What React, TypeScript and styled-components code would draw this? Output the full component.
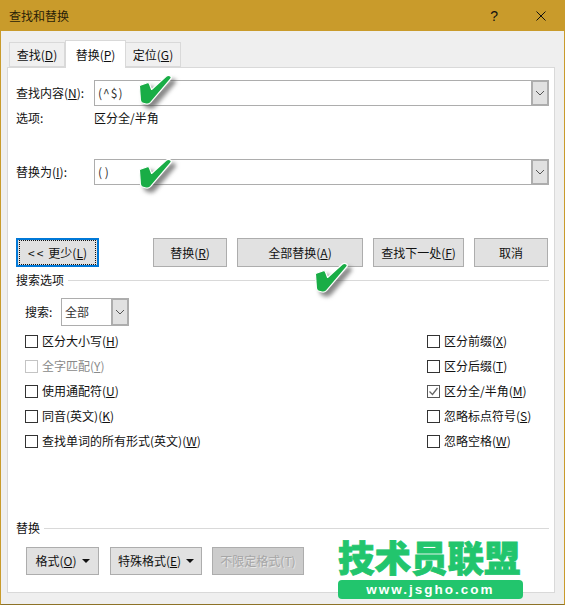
import React from "react";
import styled, { createGlobalStyle } from "styled-components";

const Global = createGlobalStyle`
  html, body { margin: 0; padding: 0; background: #efefef; }
  body { font-family: "Noto Sans CJK SC", "Liberation Sans", sans-serif; font-size: 12px; color: #111; }
  u { text-underline-offset: 1px; }
`;

const Window = styled.div`
  position: relative;
  box-sizing: border-box;
  width: 565px;
  height: 605px;
  overflow: hidden;
  background: #efefef;
  border-left: 1px solid #c99b2b;
  border-right: 1px solid #c99b2b;
  border-bottom: 1px solid #8d7226;
  display: flex;
  flex-direction: column;
`;

const TitleBar = styled.header`
  flex: none;
  height: 31px;
  background: #c99b2b;
  display: flex;
  align-items: center;
  padding: 0 18px 0 8px;
  color: #2a2208;
  line-height: 1;
`;

const Title = styled.div`
  flex: 1;
  font-size: 12px;
`;

const Help = styled.span`
  font-family: "Liberation Sans", sans-serif;
  font-size: 14px;
  margin-right: 38px;
  color: #111;
`;

const TabStrip = styled.div`
  flex: none;
  height: 27px;
  margin-top: 9px;
  padding-left: 8px;
  display: flex;
  align-items: flex-end;
`;

const Tab = styled.div<{ $active?: boolean; $w: number }>`
  box-sizing: border-box;
  position: relative;
  width: ${(p) => p.$w}px;
  height: ${(p) => (p.$active ? 28 : 25)}px;
  margin-bottom: ${(p) => (p.$active ? -1 : 0)}px;
  z-index: ${(p) => (p.$active ? 1 : 0)};
  background: ${(p) => (p.$active ? "#fff" : "#f0f0f0")};
  border: 1px solid #d9d9d9;
  border-bottom: ${(p) => (p.$active ? "none" : "1px solid #d9d9d9")};
  border-left: ${(p) => (p.$active ? "1px solid #d9d9d9" : "none")};
  display: flex;
  align-items: center;
  justify-content: center;
  &:first-child { border-left: 1px solid #d9d9d9; }
`;

const Panel = styled.main`
  box-sizing: border-box;
  flex: none;
  width: 548px;
  height: 526px;
  margin-left: 6px;
  background: #fff;
  border: 1px solid #d9d9d9;
  padding: 12px 5px 0 8px;
  display: flex;
  flex-direction: column;
`;

const FieldRow = styled.div<{ $top: number }>`
  display: flex;
  align-items: center;
  height: 26px;
  margin-top: ${(p) => p.$top}px;
`;

const FieldLabel = styled.label`
  flex: none;
  width: 78px;
  padding-bottom: 2px;
`;

const Combo = styled.div`
  box-sizing: border-box;
  flex: 1;
  height: 26px;
  border: 1px solid #adadad;
  display: flex;
  align-items: center;
`;

const ComboText = styled.span<{ $spaced?: boolean }>`
  flex: 1;
  padding: 0 0 2px 3px;
  color: #333;
  font-size: 12px;
  letter-spacing: ${(p) => (p.$spaced ? "1px" : "0")};
`;

const ComboArrow = styled.span`
  box-sizing: border-box;
  flex: none;
  width: 18px;
  height: 26px;
  margin: -1px -1px -1px 0;
  background: #e1e1e1;
  border: 2px solid #adadad;
  display: flex;
  align-items: center;
  justify-content: center;
`;

const OptionLine = styled.div`
  display: flex;
  align-items: center;
  height: 17px;
  margin-top: 4px;
`;

const OptionValue = styled.span`
  padding-bottom: 2px;
`;

const ActionRow = styled.div`
  display: flex;
  height: 29px;
  margin-top: 53px;
  gap: 10px;
`;

const Button = styled.div<{ $w: number; $after?: number; $disabled?: boolean }>`
  box-sizing: border-box;
  flex: none;
  width: ${(p) => p.$w}px;
  height: 100%;
  margin-right: ${(p) => p.$after ?? 0}px;
  padding-bottom: 1px;
  background: ${(p) => (p.$disabled ? "#cccccc" : "#e1e1e1")};
  border: 1px solid #adadad;
  color: ${(p) => (p.$disabled ? "#a6a6a6" : "#111")};
  text-shadow: ${(p) => (p.$disabled ? "1px 1px 0 #e6e6e6" : "none")};
  display: flex;
  align-items: center;
  justify-content: center;
  gap: 5px;
  white-space: nowrap;
`;

const DefaultButton = styled(Button)`
  border: 2px solid #0078d7;
  padding: 0;
`;

const FocusRing = styled.span`
  box-sizing: border-box;
  width: 100%;
  height: 100%;
  margin: 1px;
  padding-bottom: 1px;
  border: 1px dotted #111;
  display: flex;
  align-items: center;
  justify-content: center;
`;

const Arrows = styled.span`
  letter-spacing: 2px;
  margin-right: 3px;
`;

const Section = styled.div<{ $top: number }>`
  display: flex;
  align-items: center;
  height: 18px;
  margin-top: ${(p) => p.$top}px;
  gap: 4px;
  line-height: 16px;
  padding-bottom: 2px;
  box-sizing: border-box;
  &::after {
    content: "";
    flex: 1;
    height: 1px;
    background: #d9d9d9;
  }
`;

const SearchRow = styled.div`
  display: flex;
  align-items: center;
  height: 28px;
  margin-top: 8px;
  padding-left: 9px;
`;

const SearchLabel = styled.label`
  flex: none;
  width: 36px;
  padding-bottom: 2px;
`;

const Select = styled.div`
  box-sizing: border-box;
  width: 68px;
  height: 28px;
  border: 1px solid #adadad;
  display: flex;
  align-items: center;
`;

const SelectArrow = styled(ComboArrow)`
  height: 28px;
`;

const Options = styled.div`
  display: flex;
  justify-content: space-between;
  margin-top: 3px;
  padding-left: 9px;
`;

const Column = styled.div<{ $w?: number }>`
  display: flex;
  flex-direction: column;
  width: ${(p) => (p.$w ? `${p.$w}px` : "auto")};
`;

const CheckRow = styled.div<{ $disabled?: boolean }>`
  display: flex;
  align-items: center;
  height: 25px;
  gap: 4px;
  color: ${(p) => (p.$disabled ? "#8a8a8a" : "#111")};
`;

const CheckText = styled.span`
  padding-bottom: 2px;
`;

const Box = styled.span<{ $disabled?: boolean; $checked?: boolean }>`
  box-sizing: border-box;
  flex: none;
  width: 13px;
  height: 13px;
  border: 1px solid ${(p) => (p.$disabled ? "#c4c4c4" : p.$checked ? "#555" : "#333")};
  background: #fff;
  display: flex;
  align-items: center;
  justify-content: center;
`;

const FormatRow = styled.div`
  display: flex;
  height: 28px;
  margin-top: 9px;
  padding-left: 10px;
  gap: 10px;
`;

const Caret = styled.span`
  width: 0;
  height: 0;
  border-left: 4px solid transparent;
  border-right: 4px solid transparent;
  border-top: 4px solid #111;
`;

const Tick = styled.svg<{ $left: number; $top: number }>`
  position: absolute;
  left: ${(p) => p.$left}px;
  top: ${(p) => p.$top}px;
  width: 38px;
  height: 34px;
  overflow: visible;
  filter: drop-shadow(4px 4px 2px rgba(70, 70, 70, 0.65));
`;

const Watermark = styled.div`
  position: absolute;
  left: 337px;
  top: 534px;
  width: 185px;
  display: flex;
  flex-direction: column;
  align-items: stretch;
`;

const WatermarkTitle = styled.div`
  font-size: 36.5px;
  line-height: 46px;
  font-weight: 900;
  color: #22c56d;
  white-space: nowrap;
  -webkit-text-stroke: 0.8px #22c56d;
`;

const WatermarkUrl = styled.div`
  height: 19px;
  background: #22c56d;
  border-radius: 4px;
  color: #fff;
  font-family: "Liberation Sans", sans-serif;
  font-weight: 700;
  font-size: 13.5px;
  line-height: 19px;
  letter-spacing: 2px;
  text-align: center;
`;

const Chevron = () => (
  <svg width="10" height="6" viewBox="0 0 10 6">
    <path d="M1 1l4 4 4-4" fill="none" stroke="#555" strokeWidth="1" />
  </svg>
);

const GreenTick = ({ left, top }: { left: number; top: number }) => (
  <Tick $left={left} $top={top} viewBox="0 0 38 34">
    <path
      d="M2.5 13 Q2 11.5 4 11 L10.5 8.6 Q12 8.2 12.5 10 L14.6 15.5 L29.5 2 Q31.5 .6 33.5 2 Q35 3.4 33.6 5 L13.5 28.6 Q11.5 30.6 9 30 L5.5 29 Q3.6 28.4 3.4 26 Z"
      fill="#19ad46"
      stroke="#fff"
      strokeWidth="1.2"
      strokeLinejoin="round"
    />
  </Tick>
);

type Opt = { text: string; key: string; disabled?: boolean; checked?: boolean };

const leftOptions: Opt[] = [
  { text: "区分大小写", key: "H" },
  { text: "全字匹配", key: "Y", disabled: true },
  { text: "使用通配符", key: "U" },
  { text: "同音(英文)", key: "K" },
  { text: "查找单词的所有形式(英文)", key: "W" },
];

const rightOptions: Opt[] = [
  { text: "区分前缀", key: "X" },
  { text: "区分后缀", key: "T" },
  { text: "区分全/半角", key: "M", checked: true },
  { text: "忽略标点符号", key: "S" },
  { text: "忽略空格", key: "W" },
];

const Check = ({ opt }: { opt: Opt }) => (
  <CheckRow $disabled={opt.disabled}>
    <Box $disabled={opt.disabled} $checked={opt.checked}>
      {opt.checked && (
        <svg width="11" height="11" viewBox="0 0 11 11">
          <path d="M1.5 5.5l3 3 5-6.5" fill="none" stroke="#666" strokeWidth="1.3" />
        </svg>
      )}
    </Box>
    <CheckText>
      {opt.text}(<u>{opt.key}</u>)
    </CheckText>
  </CheckRow>
);

export default function App() {
  return (
    <>
      <Global />
      <Window>
        <TitleBar>
          <Title>查找和替换</Title>
          <Help>?</Help>
          <svg width="10" height="10" viewBox="0 0 10 10">
            <path d="M.5.5l9 9M9.5.5l-9 9" stroke="#111" strokeWidth="1" fill="none" />
          </svg>
        </TitleBar>
        <TabStrip>
          <Tab $w={56}><span>查找(<u>D</u>)</span></Tab>
          <Tab $w={61} $active><span>替换(<u>P</u>)</span></Tab>
          <Tab $w={55}><span>定位(<u>G</u>)</span></Tab>
        </TabStrip>
        <Panel>
          <FieldRow $top={0}>
            <FieldLabel>查找内容(<u>N</u>):</FieldLabel>
            <Combo>
              <ComboText $spaced>(^$)</ComboText>
              <ComboArrow><Chevron /></ComboArrow>
            </Combo>
          </FieldRow>
          <OptionLine>
            <FieldLabel>选项:</FieldLabel>
            <OptionValue>区分全/半角</OptionValue>
          </OptionLine>
          <FieldRow $top={32}>
            <FieldLabel>替换为(<u>I</u>):</FieldLabel>
            <Combo>
              <ComboText>( )</ComboText>
              <ComboArrow><Chevron /></ComboArrow>
            </Combo>
          </FieldRow>
          <ActionRow>
            <DefaultButton $w={83} $after={44}>
              <FocusRing><Arrows>&lt;&lt;</Arrows><span>更少(<u>L</u>)</span></FocusRing>
            </DefaultButton>
            <Button $w={74}><span>替换(<u>R</u>)</span></Button>
            <Button $w={126}><span>全部替换(<u>A</u>)</span></Button>
            <Button $w={91}><span>查找下一处(<u>F</u>)</span></Button>
            <Button $w={74}>取消</Button>
          </ActionRow>
          <Section $top={5}>搜索选项</Section>
          <SearchRow>
            <SearchLabel>搜索:</SearchLabel>
            <Select>
              <ComboText>全部</ComboText>
              <SelectArrow><Chevron /></SelectArrow>
            </Select>
          </SearchRow>
          <Options>
            <Column>
              {leftOptions.map((o) => <Check key={o.text} opt={o} />)}
            </Column>
            <Column $w={122}>
              {rightOptions.map((o) => <Check key={o.text} opt={o} />)}
            </Column>
          </Options>
          <Section $top={66}>替换</Section>
          <FormatRow>
            <Button $w={73} $after={1}><span>格式(<u>O</u>)</span><Caret /></Button>
            <Button $w={92}><span>特殊格式(<u>E</u>)</span><Caret /></Button>
            <Button $w={92} $disabled>不限定格式(T)</Button>
          </FormatRow>
        </Panel>
        <GreenTick left={136} top={74} />
        <GreenTick left={136} top={158} />
        <GreenTick left={312} top={262} />
        <Watermark>
          <WatermarkTitle>技术员联盟</WatermarkTitle>
          <WatermarkUrl>www.jsgho.com</WatermarkUrl>
        </Watermark>
      </Window>
    </>
  );
}
